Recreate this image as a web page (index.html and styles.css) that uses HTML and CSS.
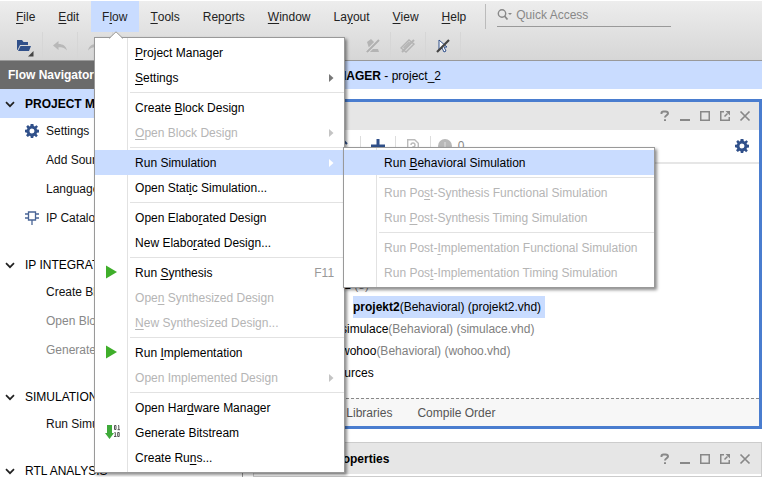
FILE: index.html
```
<!DOCTYPE html>
<html lang="en">
<head>
<meta charset="utf-8">
<title>project_2</title>
<link rel="stylesheet" href="styles.css">
</head>
<body>
<svg class="defs" aria-hidden="true">
  <symbol id="gear" viewBox="0 0 14 14"><path fill="#30508a" fill-rule="evenodd" d="M5.6 0h2.8l.4 2 1 .4L11.500 1.300l1.500 1.500L11.600 4.300l.4 1.200 2 .3v2.600l-2 .4-.5 1.100 1.300 1.700-1.700 1.600L9.600 11.800l-1 .4-.4 1.800H5.800l-.4-1.900-1-.4L2.800 13 1 11.300l1.300-1.600-.4-1L0 8.300V5.700l2-.3.400-1.100L1.200 2.700 3 1.100 4.500 2.400l.8-.4zM7 4.500a2.500 2.500 0 1 0 0 5 2.500 2.500 0 0 0 0-5z"/></symbol>
  <symbol id="chevron" viewBox="0 0 10 7"><path d="M1 1.200l4 4 4-4" fill="none" stroke="#222" stroke-width="1.700"/></symbol>
  <symbol id="play" viewBox="0 0 11 14"><path d="M0 .5L11 7 0 13.500z" fill="#3fae2a"/></symbol>
  <symbol id="arrow" viewBox="0 0 5 8"><path d="M0 0l4.500 4L0 8z" fill="currentColor"/></symbol>
  <symbol id="undo" viewBox="0 0 14 10"><path d="M0 4.500L5.500 0v3C10 3 13 5 14 9.500 11.500 6.700 9 6.200 5.500 6.200V9z" fill="#b8b8b8"/></symbol>
  <symbol id="help" viewBox="0 0 12 12"><path d="M2.500 4V3q0-1.500 2-1.500h2q2.500 0 2.500 2c0 1.700-3 1.800-3 4M6 9.200V11" fill="none" stroke="#888" stroke-width="2"/></symbol>
  <symbol id="min" viewBox="0 0 12 12"><path d="M1 9h10v2H1z" fill="#888"/></symbol>
  <symbol id="max" viewBox="0 0 12 12"><path d="M1.750 1.750h8.500v8.500h-8.500z" fill="none" stroke="#888" stroke-width="1.500"/></symbol>
  <symbol id="float" viewBox="0 0 12 12"><path d="M5 1.750H1.750v8.500h8.500V7M5.500 6.500l3-3" fill="none" stroke="#888" stroke-width="1.500"/><path d="M6.500 1H11v4.500z" fill="#888"/></symbol>
  <symbol id="close" viewBox="0 0 12 12"><path d="M1.500 1.500l9 9M10.500 1.500l-9 9" fill="none" stroke="#888" stroke-width="1.700"/></symbol>
</svg>

<header class="topbar">
  <nav class="menubar" aria-label="Main menu">
    <button><u>F</u>ile</button>
    <button><u>E</u>dit</button>
    <div class="open-menu">
      <button class="active" aria-haspopup="menu" aria-expanded="true">F<u>l</u>ow</button>
      <svg class="caret" viewBox="0 0 14 8"><path d="M0 8L7 1l7 7z" fill="#fff"/><path d="M0 7.500L7 .8l7 6.700" fill="none" stroke="#999"/></svg>
      <div class="menu flow-menu" role="menu">
        <button role="menuitem"><u>P</u>roject Manager</button>
        <button role="menuitem"><u>S</u>ettings<svg class="more"><use href="#arrow"/></svg></button>
        <hr>
        <button role="menuitem">Create <u>B</u>lock Design</button>
        <button role="menuitem" disabled><u>O</u>pen Block Design<svg class="more"><use href="#arrow"/></svg></button>
        <hr>
        <div class="item-group">
          <button class="selected" role="menuitem" aria-haspopup="menu">Run Simulation<svg class="more"><use href="#arrow"/></svg></button>
          <div class="menu submenu" role="menu">
            <button class="selected" role="menuitem">Run <u>B</u>ehavioral Simulation</button>
            <hr>
            <button role="menuitem" disabled>Run Po<u>s</u>t-Synthesis Functional Simulation</button>
            <button role="menuitem" disabled>Run <u>P</u>ost-Synthesis Timing Simulation</button>
            <hr>
            <button role="menuitem" disabled>Run Post-<u>I</u>mplementation Functional Simulation</button>
            <button role="menuitem" disabled>Run Pos<u>t</u>-Implementation Timing Simulation</button>
          </div>
        </div>
        <button role="menuitem">Open Stat<u>i</u>c Simulation...</button>
        <hr>
        <button role="menuitem">Open Elabo<u>r</u>ated Design</button>
        <button role="menuitem">New Elabo<u>r</u>ated Design...</button>
        <hr>
        <button role="menuitem"><svg class="lead play"><use href="#play"/></svg>Run <u>S</u>ynthesis<kbd>F11</kbd></button>
        <button role="menuitem" disabled>Ope<u>n</u> Synthesized Design</button>
        <button role="menuitem" disabled><u>N</u>ew Synthesized Design...</button>
        <hr>
        <button role="menuitem"><svg class="lead play"><use href="#play"/></svg>Run <u>I</u>mplementation</button>
        <button role="menuitem" disabled>Open Implemented Design<svg class="more"><use href="#arrow"/></svg></button>
        <hr>
        <button role="menuitem">Open Har<u>d</u>ware Manager</button>
        <button role="menuitem"><svg class="lead bits" viewBox="0 0 14 14"><path d="M1 0h5v8h2L3.500 14-1 8h2z" fill="#3faa3a"/><path d="M8.500.5H10v4H8.500zM12 .5h.8V5M11.500 4.700H14M8.500 7.500h.8V12M8 11.500h2.500M11.700 7.500h1.500v4h-1.500z" fill="none" stroke="#555"/></svg>Generate Bitstream</button>
        <button role="menuitem">Create Ru<u>n</u>s...</button>
      </div>
    </div>
    <button><u>T</u>ools</button>
    <button>Rep<u>o</u>rts</button>
    <button><u>W</u>indow</button>
    <button>La<u>y</u>out</button>
    <button><u>V</u>iew</button>
    <button><u>H</u>elp</button>
    <label class="search">
      <svg viewBox="0 0 16 12"><circle cx="5" cy="4.500" r="3.700" fill="none" stroke="#888" stroke-width="1.400"/><path d="M7.500 7l3 3.500" stroke="#888" stroke-width="1.800"/><path d="M11 4h4l-2 2z" fill="#888"/></svg>
      <input type="search" placeholder="Quick Access" aria-label="Quick Access">
    </label>
  </nav>
  <div class="toolbar">
    <button class="tool-open" aria-label="Open"><svg width="18" height="18" viewBox="0 0 18 18"><path d="M1 1h5l1.500 2H12v3H4L1.500 11H1z" fill="#30508a"/><path d="M4.500 7H15l-2 5H2z" fill="#30508a"/><path d="M17.500 12v5.500H12z" fill="#444"/></svg></button>
    <button aria-label="Undo"><svg width="14" height="10"><use href="#undo"/></svg></button>
    <button aria-label="Redo"><svg class="flip" width="14" height="10"><use href="#undo"/></svg></button>
    <button class="tool-mark" aria-label="Clear highlights"><svg width="16" height="14" viewBox="0 0 16 14"><path d="M2 3l4-3 4 4-3 5H4zM2 10h11l1 3H1z" fill="#b4b4b4"/><path d="M2 13L14 1" stroke="#dedede" stroke-width="4"/><path d="M2 13L14 1" stroke="#b0b0b0" stroke-width="2"/></svg></button>
    <button aria-label="Clear marks"><svg width="16" height="14" viewBox="0 0 16 14"><path d="M1 9l8-8 5 4-8 8zM3.500 9l6-6" fill="none" stroke="#b4b4b4" stroke-width="1.400"/><path d="M2 13L14 1" stroke="#b4b4b4" stroke-width="2"/></svg></button>
    <button aria-label="Clear selection"><svg width="16" height="14" viewBox="0 0 16 14"><path d="M4 1v10l3-2 2 4 2-1-2-4h3z" fill="#fff" stroke="#30508a"/><path d="M2 13L14 1" stroke="#444" stroke-width="2.200"/></svg></button>
  </div>
</header>

<div class="workspace">
  <aside class="navigator">
    <h2>Flow Navigator</h2>
    <section>
      <h3 class="current"><svg><use href="#chevron"/></svg>PROJECT MANAGER</h3>
      <a href="#"><svg width="14" height="14"><use href="#gear"/></svg>Settings</a>
      <a href="#">Add Sources</a>
      <a href="#">Language Templates</a>
      <a href="#"><svg width="14" height="14" viewBox="0 0 14 14"><path d="M3.500 1h7v8h-7zM0 3h3.500M0 7h3.500M10.500 3H14M10.500 7H14M7 9v5" fill="none" stroke="#4a6596" stroke-width="1.300"/></svg>IP Catalog</a>
    </section>
    <section>
      <h3><svg><use href="#chevron"/></svg>IP INTEGRATOR</h3>
      <a href="#">Create Block Design</a>
      <a href="#" class="dim">Open Block Design</a>
      <a href="#" class="dim">Generate Block Design</a>
    </section>
    <section>
      <h3><svg><use href="#chevron"/></svg>SIMULATION</h3>
      <a href="#">Run Simulation</a>
    </section>
    <section>
      <h3><svg><use href="#chevron"/></svg>RTL ANALYSIS</h3>
    </section>
  </aside>

  <main>
    <h1><b>PROJECT MANAGER</b> - project_2</h1>
    <div class="panels">
      <section class="panel sources">
        <header>
          <h2>Sources</h2>
          <button aria-label="Help"><svg><use href="#help"/></svg></button>
          <button aria-label="Minimize"><svg><use href="#min"/></svg></button>
          <button aria-label="Maximize"><svg><use href="#max"/></svg></button>
          <button aria-label="Float"><svg><use href="#float"/></svg></button>
          <button aria-label="Close"><svg><use href="#close"/></svg></button>
        </header>
        <div class="panel-tools">
          <button aria-label="Collapse all"><svg width="12" height="14" viewBox="0 0 12 14"><path d="M2 5l4-4 4 4M2 9l4 4 4-4" fill="none" stroke="#30508a" stroke-width="2"/></svg></button>
          <button aria-label="Add"><svg width="14" height="14" viewBox="0 0 14 14"><path d="M7 0v14M0 7h14" stroke="#30508a" stroke-width="3"/></svg></button>
          <button aria-label="Missing sources"><svg width="12" height="14" viewBox="0 0 12 14"><path d="M.7.7h7l3.600 3.600v9H.7z" fill="none" stroke="#bbb" stroke-width="1.400"/><path d="M4 6q0-2 2-2t2 2-2 2v1.500" fill="none" stroke="#bbb" stroke-width="1.400"/></svg></button>
          <button class="count"><svg width="14" height="14" viewBox="0 0 14 14"><circle cx="7" cy="7" r="7" fill="#b8b8b8"/><path d="M7 3v5M7 9.500v2" stroke="#ccc" stroke-width="2"/></svg>0</button>
          <button class="config" aria-label="Settings"><svg width="14" height="14"><use href="#gear"/></svg></button>
        </div>
        <ul class="tree">
          <li class="deep">sim_1 <span>(3)</span></li>
          <li class="chosen"><mark><b>projekt2</b>(Behavioral) (projekt2.vhd)</mark></li>
          <li class="deeper">simulace<span>(Behavioral) (simulace.vhd)</span></li>
          <li class="deeper">wohoo<span>(Behavioral) (wohoo.vhd)</span></li>
          <li>Utility Sources</li>
        </ul>
        <div class="tabs">
          <button>Hierarchy</button>
          <button>Libraries</button>
          <button>Compile Order</button>
        </div>
      </section>
      <section class="panel properties">
        <header>
          <h2>Source File Properties</h2>
          <button aria-label="Help"><svg><use href="#help"/></svg></button>
          <button aria-label="Minimize"><svg><use href="#min"/></svg></button>
          <button aria-label="Maximize"><svg><use href="#max"/></svg></button>
          <button aria-label="Float"><svg><use href="#float"/></svg></button>
          <button aria-label="Close"><svg><use href="#close"/></svg></button>
        </header>
      </section>
    </div>
  </main>
</div>
</body>
</html>
```
FILE: styles.css
```
* { box-sizing: border-box; }

body {
  margin: 0;
  height: 100vh;
  display: flex;
  flex-direction: column;
  overflow: hidden;
  background: #fff;
  color: #000;
  font: 12px/16px "Liberation Sans", Arial, sans-serif;
}

button {
  display: flex;
  align-items: center;
  justify-content: center;
  padding: 0;
  border: 0;
  background: none;
  color: inherit;
  font: inherit;
  white-space: pre;
}

u { text-underline-offset: 2px; }
h1, h2, h3, ul { margin: 0; padding: 0; font: inherit; }
svg { display: block; flex: none; }
.defs { position: absolute; width: 0; height: 0; }

/* Top bar */
.topbar {
  flex: none;
  margin-top: 1px;
  border-bottom: 1px solid #999;
  background: linear-gradient(#ededed, #d6d6d6);
}

.menubar { display: flex; height: 31px; padding-left: 5px; color: #222; }
.menubar > button, .open-menu > button { height: 31px; padding: 0 12px 0 11px; }
.open-menu { position: relative; }
.open-menu > .active { background: #c9dcff; }
.caret { position: absolute; z-index: 3; left: 18px; top: 30px; width: 14px; height: 8px; }

.search {
  display: flex;
  align-items: center;
  gap: 3px;
  height: 26px;
  margin-left: 19px;
  padding-top: 3px;
  flex: 0 1 142px;
  border-bottom: 1px solid #999;
  position: relative;
}
.search::before {
  content: "";
  position: absolute;
  left: -12px;
  top: 3px;
  height: 25px;
  border-left: 1px solid #bbb;
}
.search svg { width: 16px; height: 12px; }
.search input { min-width: 0; flex: 1; padding: 0; border: 0; outline: 0; background: none; font: inherit; }
.search input::placeholder { color: #888; opacity: 1; }

.toolbar { display: flex; height: 28px; padding-left: 8px; }
.toolbar button { width: 35px; height: 28px; border-right: 1px solid #d6d6d6; }
.toolbar .tool-open { padding-top: 4px; }
.toolbar .tool-mark { margin-left: 243px; }
.flip { transform: scaleX(-1); }

/* Menus */
.menu {
  position: absolute;
  z-index: 2;
  padding: 2px 0;
  border: 1px solid #999;
  background: linear-gradient(#e2e2e2, #e2e2e2) 32px 0 / 1px 100% no-repeat #fff;
  box-shadow: 2px 2px 3px rgba(0, 0, 0, .45);
  color: #000;
}
.menu button { position: relative; justify-content: flex-start; width: 100%; height: 25px; padding: 0 10px 0 40px; }
.menu button:disabled { color: #b5b5b5; }
.menu .selected { background: #c9dcff; }
.menu hr { height: 1px; margin: 2px 0 2px 35px; border: 0; background: #e2e2e2; }
.menu .more { width: 5px; height: 8px; margin-left: auto; color: #777; }
.menu button:disabled .more { color: #c4c4c4; }
.menu .selected .more { color: #fff; }
.menu .lead { position: absolute; left: 11px; top: 5px; }
.menu .play { width: 11px; height: 14px; }
.menu .bits { width: 14px; height: 14px; overflow: visible; }
.menu kbd { margin-left: auto; color: #999; font: inherit; }
.flow-menu { left: 3px; top: 36px; width: 251px; }
.item-group { position: relative; }
.submenu { left: 248px; top: -3px; width: 312px; }

/* Flow navigator */
.workspace { display: flex; flex: 1; min-height: 0; }
.navigator { flex: none; width: 243px; overflow: hidden; border-right: 1px solid #999; white-space: nowrap; }
.navigator h2 { padding: 6px 8px; height: 28px; background: #6b6b6b; color: #fff; font-weight: bold; }
.navigator section { margin-bottom: 18px; }
.navigator h3 { display: flex; align-items: center; gap: 10px; height: 29px; margin-bottom: -2px; padding: 1px 5px 0; }
.navigator h3 svg { width: 10px; height: 7px; }
.navigator .current { background: #c9dcff; font-weight: bold; }
.navigator a { display: flex; align-items: center; height: 29px; padding-left: 46px; color: #111; text-decoration: none; }
.navigator a svg { margin: 0 7px 0 -21px; }
.navigator .dim { color: #888; }

/* Work area */
main { display: flex; flex: 1; flex-direction: column; min-width: 0; padding-left: 10px; }
h1 { flex: none; height: 28px; padding: 7px 0 0 6px; margin-bottom: 10px; background: #c9dcff; }
.panels { display: flex; flex: 1; flex-direction: column; gap: 13px; min-height: 0; }
.panel header { display: flex; align-items: center; height: 28px; padding-right: 4px; background: #e6e6e6; }
.panel h2 { margin-right: auto; padding-left: 8px; font-weight: bold; }
.panel header button { width: 20px; height: 20px; }
.panel header svg { width: 12px; height: 12px; }
.sources { border: 3px solid #4a7dcf; }
.properties { flex: 1; border: 1px solid #ccc; }
.properties header { height: 31px; padding-right: 6px; }

.panel-tools { display: flex; align-items: center; height: 34px; padding-left: 70px; border-bottom: 2px solid #e6e6e6; }
.panel-tools button { width: 35px; height: 20px; border-right: 1px solid #ddd; }
.panel-tools .count { border: 0; width: 40px; gap: 6px; color: #888; }
.panel-tools .config { margin-left: auto; border: 0; }

.tree { padding: 110px 0 14px; list-style: none; }
.tree li { display: flex; height: 22px; align-items: center; padding-left: 41px; white-space: pre; }
.tree span { color: #808080; }
.tree .deep { padding-left: 63px; }
.tree .deeper { padding-left: 85px; }
.tree .chosen { padding-left: 97px; }
.tree mark { height: 22px; padding: 3px 4px 3px 0; background: #c9dcff; }

.tabs { display: flex; gap: 25px; height: 28px; padding-left: 14px; border-top: 1px dashed #888; background: #f7f7f7; color: #555; }
```
